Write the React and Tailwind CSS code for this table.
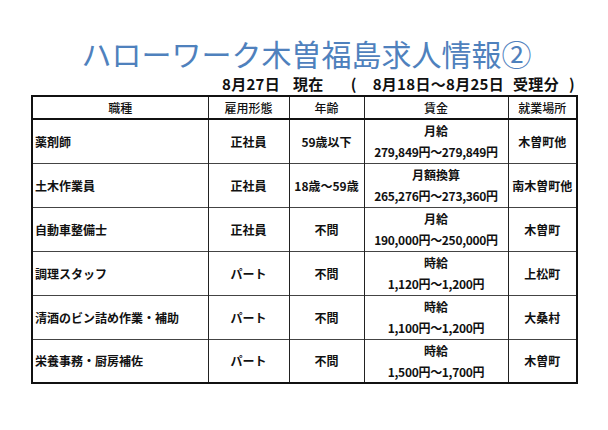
import React from "react";

const rows = [
  { job: "薬剤師", type: "正社員", age: "59歳以下", wl: "月給", wage: "279,849円～279,849円", place: "木曽町他" },
  { job: "土木作業員", type: "正社員", age: "18歳～59歳", wl: "月額換算", wage: "265,276円～273,360円", place: "南木曽町他" },
  { job: "自動車整備士", type: "正社員", age: "不問", wl: "月給", wage: "190,000円～250,000円", place: "木曽町" },
  { job: "調理スタッフ", type: "パート", age: "不問", wl: "時給", wage: "1,120円～1,200円", place: "上松町" },
  { job: "清酒のビン詰め作業・補助", type: "パート", age: "不問", wl: "時給", wage: "1,100円～1,200円", place: "大桑村" },
  { job: "栄養事務・厨房補佐", type: "パート", age: "不問", wl: "時給", wage: "1,500円～1,700円", place: "木曽町" },
];

export default function App() {
  return (
    <div
      className="w-[608px] h-[430px] bg-white text-[#111] overflow-hidden"
      style={{ fontFamily: '"Noto Sans CJK JP", "Noto Sans", sans-serif' }}
    >
      <div className="pt-[38px] flex justify-center">
        <h1 className="text-[30px] leading-[30px] font-normal text-[#4f81bd] ml-[5px]">
          ハローワーク木曽福島求人情報②
        </h1>
      </div>
      <div className="flex items-center h-[18px] mt-[7px] text-[15px] leading-[18px] font-semibold pl-[222px] tracking-[0.3px]">
        <span>8月27日</span>
        <span className="ml-[13px]">現在</span>
        <span className="ml-[27px]">(</span>
        <span className="ml-[16px]">8月18日～8月25日</span>
        <span className="ml-[9px]">受理分</span>
        <span className="ml-[10px]">)</span>
      </div>
      <div className="pl-[31px] pt-[2px]">
        <table className="table-fixed border-collapse border-2 border-[#111] w-[545px] text-[12px] leading-[21px] font-semibold">
          <colgroup>
            <col className="w-[176px]" />
            <col className="w-[81px]" />
            <col className="w-[75px]" />
            <col className="w-[144px]" />
            <col className="w-[69px]" />
          </colgroup>
          <thead>
            <tr className="h-[22px] border-b-2 border-[#111]">
              <th className="font-medium text-center border-r border-[#222]">職種</th>
              <th className="font-medium text-center border-r border-[#222]">雇用形態</th>
              <th className="font-medium text-center border-r border-[#222]">年齢</th>
              <th className="font-medium text-center border-r border-[#222]">賃金</th>
              <th className="font-medium text-center">就業場所</th>
            </tr>
          </thead>
          <tbody>
            {rows.map((r, i) => (
              <tr key={i} className="h-[44px] border-b border-[#444]">
                <td className="text-left pl-[2px] border-r border-[#222]">{r.job}</td>
                <td className="text-center border-r border-[#222]">{r.type}</td>
                <td className="text-center border-r border-[#222]">{r.age}</td>
                <td className="text-center border-r border-[#222]">
                  <div>{r.wl}</div>
                  <div className="tracking-[-0.3px]">{r.wage}</div>
                </td>
                <td className="text-center">{r.place}</td>
              </tr>
            ))}
          </tbody>
        </table>
      </div>
    </div>
  );
}
